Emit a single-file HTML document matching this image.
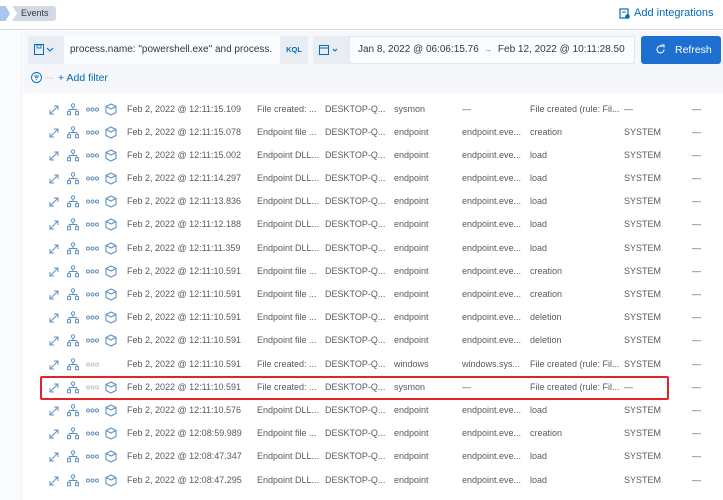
<!DOCTYPE html><html><head><style>
*{margin:0;padding:0;box-sizing:border-box}
body{width:723px;height:500px;overflow:hidden;background:#fff;font-family:"Liberation Sans",sans-serif;position:relative;color:#343741}
.abs{position:absolute}
.top{left:0;top:0;width:723px;height:30px;background:#fff;border-bottom:1px solid #d3dae6}
.side{left:0;top:31px;width:22px;height:469px;background:#fafbfd;border-right:1px solid #eef0f3}
.main{left:23px;top:31px;width:700px;height:62px;background:#f5f7fa}
.tbl{left:23px;top:93px;width:700px;height:397px;background:#fff}
.row{position:absolute;left:0;width:723px;height:23px;font-size:9px;line-height:23px;color:#555a64}
.row span{position:absolute;white-space:nowrap}
svg{position:absolute}
</style></head><body>
<div class="abs top"></div>
<div class="abs" style="left:0;top:6px;width:10px;height:15px;background:#a6c8ee;clip-path:polygon(0 0,55% 0,100% 50%,55% 100%,0 100%)"></div>
<div class="abs" style="left:12px;top:6px;width:44px;height:15px;background:#d3dae6;font-size:9px;line-height:15px;padding-left:9px;border-radius:0 3px 3px 0;clip-path:polygon(0 0,100% 0,100% 100%,0 100%,5px 50%)">Events</div>
<svg style="left:619px;top:8px" width="11" height="11" viewBox="0 0 11 11"><rect x="1" y="1" width="8" height="9" fill="none" stroke="#006bb8" stroke-width="1.2"/><line x1="3" y1="4" x2="7" y2="4" stroke="#006bb8"/><circle cx="8.5" cy="8.5" r="2.3" fill="#006bb8"/></svg>
<div class="abs" style="left:634px;top:7px;font-size:11px;color:#006bb8">Add integrations</div>
<div class="abs side"></div>
<div class="abs main"></div>
<div class="abs" style="left:28px;top:36px;width:36px;height:28px;background:#e9edf3;border-radius:3px 0 0 3px"></div>
<svg style="left:34px;top:44px" width="20" height="12" viewBox="0 0 20 12"><rect x="0.5" y="0.5" width="9" height="10" fill="none" stroke="#006bb8"/><rect x="3" y="1" width="4" height="3" fill="none" stroke="#006bb8" stroke-width=".8"/><path d="M13 4l3 3 3-3" fill="none" stroke="#006bb8"/></svg>
<div class="abs" style="left:64px;top:36px;width:216px;height:28px;background:#fbfcfd;font-size:10px;line-height:28px;padding-left:6px;color:#343741">process.name: "powershell.exe" and process.</div>
<div class="abs" style="left:280px;top:36px;width:28px;height:28px;background:#e9edf3;font-size:7.5px;line-height:28px;text-align:center;color:#006bb8;font-weight:bold">KQL</div>
<div class="abs" style="left:313px;top:36px;width:36px;height:28px;background:#e9edf3;border-radius:3px 0 0 3px"></div>
<svg style="left:319px;top:44px" width="20" height="12" viewBox="0 0 20 12"><rect x="0.5" y="1.5" width="9" height="9" fill="none" stroke="#006bb8"/><line x1="0" y1="4" x2="10" y2="4" stroke="#006bb8"/><path d="M14 5l2 2 2-2" fill="none" stroke="#006bb8"/></svg>
<div class="abs" style="left:349px;top:36px;width:286px;height:28px;background:#fbfcfd;border:1px solid #e3e8f0;font-size:10px;line-height:26px;padding-left:8px;color:#343741">Jan 8, 2022 @ 06:06:15.76 &nbsp;<span style="font-size:8px;color:#69707d">→</span>&nbsp; Feb 12, 2022 @ 10:11:28.50</div>
<div class="abs" style="left:641px;top:36px;width:80px;height:28px;background:#1d70cf;border-radius:3px;color:#fff;font-size:10.5px;line-height:28px;padding-left:34px">Refresh</div>
<svg style="left:655px;top:44px" width="11" height="11" viewBox="0 0 11 11"><path d="M9 5.5A3.5 3.5 0 1 1 7.5 2.6" fill="none" stroke="#fff" stroke-width="1.1"/><path d="M6.5 1h2.5v2.5" fill="none" stroke="#fff" stroke-width="1.1"/></svg>
<svg style="left:31px;top:72px" width="24" height="12" viewBox="0 0 24 12"><circle cx="5.5" cy="5.5" r="5" fill="none" stroke="#006bb8" stroke-width=".9"/><path d="M3 4h5M4 5.7h3M5 7.4h1" stroke="#006bb8" stroke-width=".9"/><line x1="14" y1="6" x2="23" y2="6" stroke="#d3dae6"/></svg>
<div class="abs" style="left:58px;top:72px;font-size:10.5px;color:#006bb8">+ Add filter</div>
<div class="abs tbl"></div>
<div id="rows"></div>
<div class="abs" style="left:40px;top:376px;width:629px;height:24px;border:2px solid #e0242a;border-radius:2px"></div>
<script>
var d=[["15.109","File created: ...","sysmon","—","File created (rule: Fil...","—",1],
["15.078","Endpoint file ...","endpoint","endpoint.eve...","creation","SYSTEM",1],
["15.002","Endpoint DLL...","endpoint","endpoint.eve...","load","SYSTEM",1],
["14.297","Endpoint DLL...","endpoint","endpoint.eve...","load","SYSTEM",1],
["13.836","Endpoint DLL...","endpoint","endpoint.eve...","load","SYSTEM",1],
["12.188","Endpoint DLL...","endpoint","endpoint.eve...","load","SYSTEM",1],
["11.359","Endpoint DLL...","endpoint","endpoint.eve...","load","SYSTEM",1],
["10.591","Endpoint file ...","endpoint","endpoint.eve...","creation","SYSTEM",1],
["10.591","Endpoint file ...","endpoint","endpoint.eve...","creation","SYSTEM",1],
["10.591","Endpoint file ...","endpoint","endpoint.eve...","deletion","SYSTEM",1],
["10.591","Endpoint file ...","endpoint","endpoint.eve...","deletion","SYSTEM",1],
["10.591","File created: ...","windows","windows.sys...","File created (rule: Fil...","SYSTEM",0],
["10.591","File created: ...","sysmon","—","File created (rule: Fil...","—",2],
["10.576","Endpoint DLL...","endpoint","endpoint.eve...","load","SYSTEM",1],
["08:59.989","Endpoint file ...","endpoint","endpoint.eve...","creation","SYSTEM",1],
["08:47.347","Endpoint DLL...","endpoint","endpoint.eve...","load","SYSTEM",1],
["08:47.295","Endpoint DLL...","endpoint","endpoint.eve...","load","SYSTEM",1]];
var h="";
d.forEach(function(r,i){var y=97.5+i*23.19;var t=r[0].indexOf(":")>0?"12:"+r[0]:"12:11:"+r[0];
var dots=r[6]==1?"#6092c0":"#c2c6cc";
h+='<div class="row" style="top:'+y+'px">'+
'<svg style="left:48px;top:6px" width="12" height="12" viewBox="0 0 12 12"><path d="M2 10L10 2M6 2h4v4M2 6v4h4" fill="none" stroke="#6092c0" stroke-width="1"/></svg>'+
'<svg style="left:67px;top:5px" width="12" height="13" viewBox="0 0 12 13"><circle cx="6" cy="2.5" r="1.7" fill="none" stroke="#6092c0"/><path d="M6 4.2v2.3M2 6.5h8M2 6.5v2M10 6.5v2" fill="none" stroke="#6092c0"/><rect x="0.5" y="8.7" width="3" height="3" fill="none" stroke="#6092c0"/><rect x="8.5" y="8.7" width="3" height="3" fill="none" stroke="#6092c0"/></svg>'+
'<svg style="left:86px;top:9px" width="13" height="5" viewBox="0 0 13 5"><circle cx="2" cy="2.5" r="1.5" fill="none" stroke="'+dots+'"/><circle cx="6.5" cy="2.5" r="1.5" fill="none" stroke="'+dots+'"/><circle cx="11" cy="2.5" r="1.5" fill="none" stroke="'+dots+'"/></svg>'+
(r[6]?'<svg style="left:105px;top:5px" width="12" height="13" viewBox="0 0 12 13"><path d="M6 1L11 3.5V9.5L6 12L1 9.5V3.5Z M1 3.5L6 6L11 3.5" fill="none" stroke="#6092c0" stroke-width="1.1"/></svg>':'')+
'<span style="left:127px">Feb 2, 2022 @ '+t+'</span><span style="left:257px">'+r[1]+'</span><span style="left:325px">DESKTOP-Q...</span><span style="left:394px">'+r[2]+'</span><span style="left:462px">'+r[3]+'</span><span style="left:530px">'+r[4]+'</span><span style="left:624px">'+r[5]+'</span><span style="left:692px">—</span></div>';});
document.getElementById("rows").innerHTML=h;
</script>
</body></html>
